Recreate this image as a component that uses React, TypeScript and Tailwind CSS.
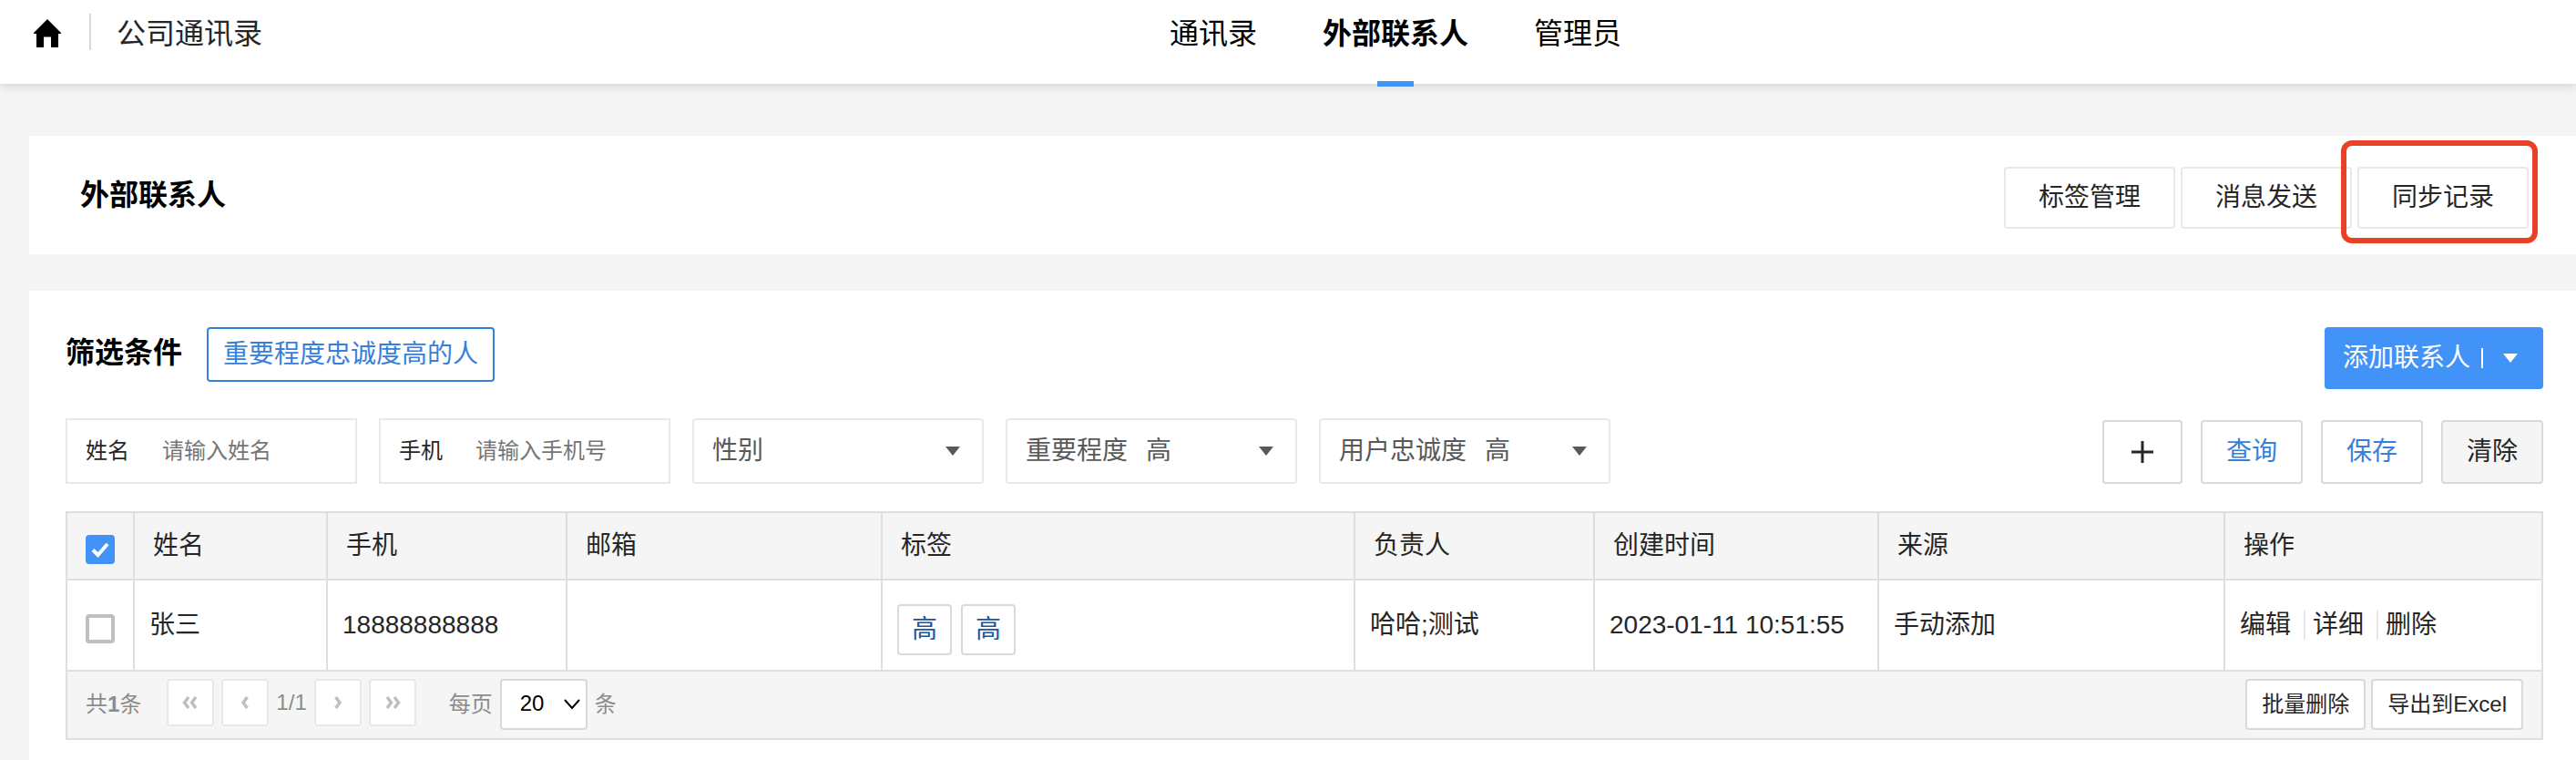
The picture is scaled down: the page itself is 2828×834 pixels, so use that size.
import { useState } from "react";
import type { ReactNode } from "react";

type Contact = {
    id: number;
    name: string;
    phone: string;
    email: string;
    tags: string[];
    owner: string;
    createdAt: string;
    source: string;
};

const contacts: Contact[] = [
    {
        id: 1,
        name: "张三",
        phone: "18888888888",
        email: "",
        tags: ["高", "高"],
        owner: "哈哈;测试",
        createdAt: "2023-01-11 10:51:55",
        source: "手动添加",
    },
];

const columns = [
    { title: "姓名", width: "w-[212px]" },
    { title: "手机", width: "w-[263px]" },
    { title: "邮箱", width: "w-[346px]" },
    { title: "标签", width: "w-[519px]" },
    { title: "负责人", width: "w-[263px]" },
    { title: "创建时间", width: "w-[312px]" },
    { title: "来源", width: "w-[380px]" },
    { title: "操作", width: "w-[347px]" },
];

const levels = ["高", "中", "低"];

function Triangle() {
    return (
        <svg className="w-4 h-[10px] shrink-0 pointer-events-none" viewBox="0 0 16 10" fill="currentColor">
            <path d="M0 0h16L8 10z" />
        </svg>
    );
}

function FilterInput({ id, label, placeholder }: { id: string; label: string; placeholder: string }) {
    return (
        <div className="w-80 h-[72px] flex items-center border-2 border-[#e8e8e8] px-5 text-2xl">
            <label htmlFor={id} className="shrink-0 mr-9">{label}</label>
            <input
                id={id}
                type="text"
                placeholder={placeholder}
                className="flex-1 min-w-0 h-full outline-none placeholder:text-[#757575]"
            />
        </div>
    );
}

function FilterSelect({ id, label, options, value }: { id: string; label: string; options: string[]; value: string }) {
    const [selected, setSelected] = useState(value);

    return (
        <div className="w-80 h-[72px] flex items-center border-2 border-[#e8e8e8] rounded px-5 text-[28px] text-[#595959]">
            <label htmlFor={id} className="shrink-0 mr-5">{label}</label>
            <select
                id={id}
                value={selected}
                onChange={(e) => setSelected(e.target.value)}
                className="flex-1 min-w-0 h-full appearance-none outline-none"
            >
                <option value=""></option>
                {options.map(o => <option key={o} value={o}>{o}</option>)}
            </select>
            <div className="mr-1">
                <Triangle />
            </div>
        </div>
    );
}

function Checkbox({ label, checked, onChange }: { label: string; checked: boolean; onChange: () => void }) {
    return (
        <label className="relative block size-8">
            <input
                type="checkbox"
                aria-label={label}
                checked={checked}
                onChange={onChange}
                className="block size-8 appearance-none rounded border-4 border-[#bfbfbf] bg-white checked:border-[#4193f7] checked:bg-[#4193f7]"
            />
            {checked && (
                <svg className="absolute inset-0 size-8 pointer-events-none" viewBox="0 0 32 32" fill="none" stroke="#fff" strokeWidth="4">
                    <path d="M8 16.5l5.5 5.5L24 10" />
                </svg>
            )}
        </label>
    );
}

function PageButton({ label, children }: { label: string; children: ReactNode }) {
    return (
        <button
            type="button"
            aria-label={label}
            className="size-[52px] flex items-center justify-center bg-white border-2 border-[#e8e8e8] rounded text-[#bfbfbf]"
        >
            <svg className="w-5 h-4" viewBox="0 0 20 16" fill="none" stroke="currentColor" strokeWidth="3.5">
                {children}
            </svg>
        </button>
    );
}

export default function App() {
    const [allChecked, setAllChecked] = useState(true);
    const [checkedIds, setCheckedIds] = useState<number[]>([]);
    const [pageSize, setPageSize] = useState("20");

    const toggle = (id: number) => {
        setCheckedIds(checkedIds.includes(id) ? checkedIds.filter(i => i !== id) : [...checkedIds, id]);
    };

    return (
        <div className="min-h-screen flex flex-col bg-[#f4f4f4] text-[#262626] font-['Liberation_Sans','Noto_Sans_CJK_SC',sans-serif]">
            {/* Top bar */}
            <header className="relative z-10 h-[92px] pt-3 grid grid-cols-[1284fr_auto_1048fr] bg-white text-[32px] leading-[50px] shadow-[0_2px_10px_rgba(0,0,0,0.15)]">
                <div className="h-[50px] pl-9 flex items-center">
                    <a href="#home" aria-label="首页" className="text-black">
                        <svg className="w-8 h-8" viewBox="0 0 32 32" fill="currentColor">
                            <path d="M16 0L31 15v1h-3v14.500q0 .5-.5.5H20.500q-.5 0-.5-.5V19.500h-8v11q0 .5-.5.5H4.500q-.5 0-.5-.5V16H1v-1z" />
                        </svg>
                    </a>
                    <div className="w-[2px] h-10 ml-[30px] mr-7 mb-1 bg-[#d9d9d9]" />
                    <span>公司通讯录</span>
                </div>
                <nav className="flex gap-[72px] text-black">
                    <a href="#contacts">通讯录</a>
                    <a href="#external" className="relative h-20 font-bold">
                        外部联系人
                        <span className="absolute -bottom-[3px] left-1/2 -translate-x-1/2 w-10 h-[6px] bg-[#4193f7]" />
                    </a>
                    <a href="#admins">管理员</a>
                </nav>
            </header>

            {/* Page title */}
            <div className="mt-[57px] ml-8 h-[130px] pl-14 pr-[52px] flex items-center justify-between bg-white">
                <h1 className="text-[32px] font-bold text-black">外部联系人</h1>
                <div className="flex gap-[6px] pt-[6px] text-[28px]">
                    <button type="button" className="h-[68px] px-9 bg-white border-2 border-[#e8e8e8] rounded">标签管理</button>
                    <button type="button" className="h-[68px] px-9 bg-white border-2 border-[#e8e8e8] rounded">消息发送</button>
                    <div className="relative">
                        <button type="button" className="h-[68px] px-9 bg-white border-2 border-[#e8e8e8] rounded">同步记录</button>
                        <div className="absolute -top-[29px] -bottom-4 -left-[18px] -right-[10px] border-6 border-[#ea4126] rounded-xl pointer-events-none" />
                    </div>
                </div>
            </div>

            <main className="mt-10 ml-8 flex-1 pt-10 pb-5 pl-10 pr-9 bg-white">
                <div className="flex items-start justify-between">
                    <div className="flex items-start">
                        <h2 className="text-[32px] leading-14 font-bold text-black">筛选条件</h2>
                        <button type="button" className="ml-[27px] h-[60px] px-4 border-2 border-[#367fdb] rounded text-[28px] text-[#367fdb]">
                            重要程度忠诚度高的人
                        </button>
                    </div>
                    <button type="button" className="h-[68px] pl-5 pr-7 flex items-center bg-[#4193f7] rounded text-[28px] text-white">
                        添加联系人
                        <span className="w-[2px] h-[22px] ml-3 mr-[22px] bg-white" />
                        <Triangle />
                    </button>
                </div>

                {/* Filters */}
                <div className="mt-8 flex items-end justify-between">
                    <div className="flex gap-6">
                        <FilterInput id="name" label="姓名" placeholder="请输入姓名" />
                        <FilterInput id="phone" label="手机" placeholder="请输入手机号" />
                        <FilterSelect id="gender" label="性别" options={["男", "女"]} value="" />
                        <FilterSelect id="importance" label="重要程度" options={levels} value="高" />
                        <FilterSelect id="loyalty" label="用户忠诚度" options={levels} value="高" />
                    </div>
                    <div className="flex gap-5 text-[28px]">
                        <button type="button" aria-label="添加条件" className="w-[88px] h-[70px] flex items-center justify-center border-2 border-[#d9d9d9] rounded">
                            <svg className="size-6" viewBox="0 0 24 24" stroke="currentColor" strokeWidth="3">
                                <path d="M12 0v24M0 12h24" />
                            </svg>
                        </button>
                        <button type="button" className="w-28 h-[70px] border-2 border-[#d9d9d9] rounded text-[#367fdb]">查询</button>
                        <button type="button" className="w-28 h-[70px] border-2 border-[#d9d9d9] rounded text-[#367fdb]">保存</button>
                        <button type="button" className="w-28 h-[70px] border-2 border-[#d9d9d9] rounded bg-[#f5f5f5]">清除</button>
                    </div>
                </div>

                {/* Contacts table */}
                <div className="mt-[30px] border-2 border-[#dedede]">
                    <table className="w-full table-fixed border-separate border-spacing-0 text-[28px] text-left">
                        <thead>
                            <tr className="h-[74px] bg-[#f5f5f5]">
                                <th className="w-[74px] pl-5 pt-2 border-r-2 border-b-2 border-[#dedede]">
                                    <Checkbox label="全选" checked={allChecked} onChange={() => setAllChecked(!allChecked)} />
                                </th>
                                {columns.map(c => (
                                    <th key={c.title} className={`${c.width} px-5 font-normal border-r-2 border-b-2 border-[#dedede] last:border-r-0`}>
                                        {c.title}
                                    </th>
                                ))}
                            </tr>
                        </thead>
                        <tbody>
                            {contacts.map(c => (
                                <tr key={c.id} className="h-[100px] *:border-r-2 *:border-b-2 *:border-[#dedede] *:last:border-r-0">
                                    <td className="pl-5 pt-2">
                                        <Checkbox label={c.name} checked={checkedIds.includes(c.id)} onChange={() => toggle(c.id)} />
                                    </td>
                                    <td className="px-4">{c.name}</td>
                                    <td className="px-4">{c.phone}</td>
                                    <td className="px-4">{c.email}</td>
                                    <td className="px-4 pt-[10px]">
                                        <div className="flex gap-[10px]">
                                            {c.tags.map((tag, i) => (
                                                <span key={i} className="h-14 px-[14px] flex items-center border-2 border-[#d9d9d9] rounded text-[#20559a]">
                                                    {tag}
                                                </span>
                                            ))}
                                        </div>
                                    </td>
                                    <td className="px-4">{c.owner}</td>
                                    <td className="px-4">{c.createdAt}</td>
                                    <td className="px-4">{c.source}</td>
                                    <td className="px-4">
                                        <div className="flex items-center gap-2">
                                            <a href="#edit" className="pr-[6px]">编辑</a>
                                            <span className="w-[2px] h-8 bg-[#e8e8e8]" />
                                            <a href="#detail" className="pr-[6px]">详细</a>
                                            <span className="w-[2px] h-8 bg-[#e8e8e8]" />
                                            <a href="#delete">删除</a>
                                        </div>
                                    </td>
                                </tr>
                            ))}
                        </tbody>
                    </table>

                    {/* Pagination */}
                    <div className="h-[73px] pt-2 px-5 flex items-start justify-between bg-[#f5f5f5] text-2xl leading-14">
                        <div className="flex items-start text-[#8c8c8c]">
                            <span className="mr-7">共<b>1</b>条</span>
                            <div className="h-[52px] flex items-center gap-2">
                                <PageButton label="首页">
                                    <path d="M8 2L3.500 8 8 14M16 2l-4.500 6 4.500 6" />
                                </PageButton>
                                <PageButton label="上一页">
                                    <path d="M12.500 2L8 8l4.500 6" />
                                </PageButton>
                                <span>1/1</span>
                                <PageButton label="下一页">
                                    <path d="M7.500 2L12 8l-4.500 6" />
                                </PageButton>
                                <PageButton label="末页">
                                    <path d="M4 2l4.500 6L4 14M12 2l4.500 6-4.500 6" />
                                </PageButton>
                            </div>
                            <label htmlFor="pageSize" className="ml-9 mr-2">每页</label>
                            <div className="relative mr-2 text-black">
                                <select
                                    id="pageSize"
                                    value={pageSize}
                                    onChange={(e) => setPageSize(e.target.value)}
                                    className="block w-24 h-14 pl-5 pb-[2px] leading-[50px] appearance-none bg-white border-2 border-[#d9d9d9] rounded"
                                >
                                    <option value="20">20</option>
                                    <option value="50">50</option>
                                    <option value="100">100</option>
                                </select>
                                <svg className="absolute right-2 top-[22px] w-[18px] h-3 pointer-events-none" viewBox="0 0 18 12" fill="none" stroke="currentColor" strokeWidth="2">
                                    <path d="M1 1l8 9 8-9" />
                                </svg>
                            </div>
                            <span>条</span>
                        </div>
                        <div className="flex gap-[6px]">
                            <button type="button" className="h-14 px-4 bg-white border-2 border-[#d9d9d9] rounded leading-none">批量删除</button>
                            <button type="button" className="h-14 px-4 bg-white border-2 border-[#d9d9d9] rounded leading-none">导出到Excel</button>
                        </div>
                    </div>
                </div>
            </main>
        </div>
    );
}
